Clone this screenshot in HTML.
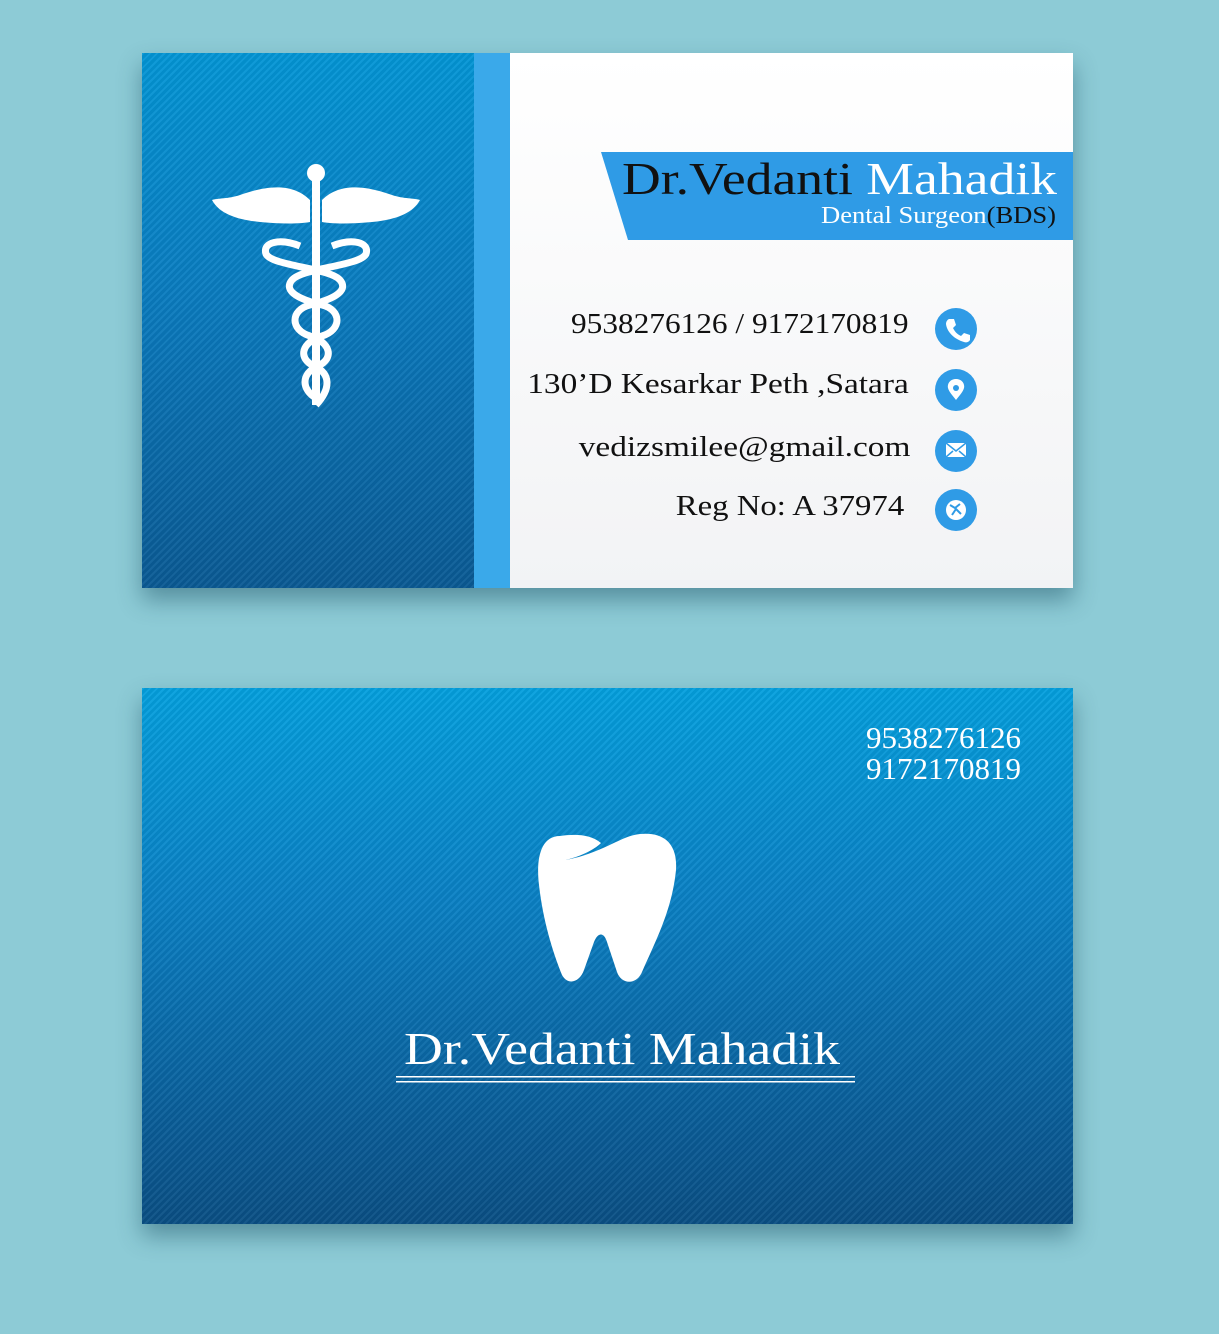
<!DOCTYPE html>
<html><head><meta charset="utf-8"><style>
body{margin:0;width:1219px;height:1334px;background:#8dcbd6;position:relative;overflow:hidden;font-family:"Liberation Serif",serif}
.abs{position:absolute}
.txt{position:absolute;color:#111;font-size:29px;white-space:nowrap;transform-origin:right center}
.ic{position:absolute;left:935px;width:42px;height:42px;border-radius:50%;background:#2f9be6}
</style></head><body>
<div class="abs" style="left:142px;top:53px;width:931px;height:535px;box-shadow:0 12px 22px rgba(20,70,90,0.45);background:#fff"></div>
<div class="abs" style="left:142px;top:53px;width:332px;height:535px;background-color:#0d79bb;background-image:repeating-linear-gradient(135deg,rgba(255,255,255,0.05) 0 2px,rgba(0,0,0,0.05) 2px 5px),linear-gradient(180deg,#0396d6 0%,#0a7cc0 45%,#0a5a94 100%)"></div>
<div class="abs" style="left:474px;top:53px;width:36px;height:535px;background:#3aa9ea"></div>
<div class="abs" style="left:510px;top:53px;width:563px;height:535px;background:linear-gradient(180deg,#fff,#f2f3f5)"></div>
<svg class="abs" style="left:0;top:0" width="1219" height="600">
<g fill="#fff">
<circle cx="316" cy="173" r="9"/>
<rect x="312" y="175" width="8" height="230"/>
<path d="M310,200 C290,180 260,188 240,195 C228,199 218,198 212,200 C220,215 240,220 260,222 C280,224 300,224 310,222Z"/>
<path d="M322,200 C342,180 372,188 392,195 C404,199 414,198 420,200 C412,215 392,220 372,222 C352,224 332,224 322,222Z"/>
</g>
<g fill="none" stroke="#fff" stroke-width="7">
<path d="M300,246 C280,238 262,242 266,254 C272,266 330,268 340,280 C350,292 330,300 310,305 C290,310 290,330 310,336 C330,342 335,358 318,366 C300,374 302,390 316,398"/>
<path d="M332,246 C352,238 370,242 366,254 C360,266 302,268 292,280 C282,292 302,300 322,305 C342,310 342,330 322,336 C302,342 297,358 314,366 C332,374 330,390 316,405"/>
</g>
<path d="M601,152 L1073,152 L1073,240 L628,240 Z" fill="#2f9be6"/>
<text x="622" y="194" font-family="Liberation Serif" font-size="46" fill="#111" textLength="435" lengthAdjust="spacingAndGlyphs">Dr.Vedanti <tspan fill="#fff">Mahadik</tspan></text>
<text x="821" y="223" font-family="Liberation Serif" font-size="24" fill="#fff" textLength="235" lengthAdjust="spacingAndGlyphs">Dental Surgeon<tspan fill="#111">(BDS)</tspan></text>
</svg>
<div class="txt" style="right:310px;top:308px;transform:scaleX(1.08)">9538276126 / 9172170819</div>
<div class="txt" style="right:310px;top:368px;transform:scaleX(1.15)">130’D Kesarkar Peth ,Satara</div>
<div class="txt" style="right:309px;top:431px;transform:scaleX(1.15)">vedizsmilee@gmail.com</div>
<div class="txt" style="right:315px;top:490px;transform:scaleX(1.13)">Reg No: A 37974</div>
<div class="ic" style="top:308px"></div><div class="ic" style="top:369px"></div><div class="ic" style="top:430px"></div><div class="ic" style="top:489px"></div>
<svg class="abs" style="left:935px;top:308px" width="42" height="230">
<path d="M14,11 l5,0 2,6 -3,3 c2,4 4,6 8,8 l3,-3 6,2 0,5 c-1,2 -4,3 -6,2 C19,31 12,24 11,16 c0,-2 1,-4 3,-5z" fill="#fff"/>
<path d="M21,71 c-6,0 -9,5 -8,9 c1,4 5,8 8,12 c3,-4 7,-8 8,-12 c1,-4 -2,-9 -8,-9z" fill="#fff"/><circle cx="21" cy="80" r="3" fill="#2f9be6"/>
<rect x="11" y="135" width="20" height="14" fill="#fff"/><path d="M11,135 l10,8 10,-8 M11,149 l7,-6 M31,149 l-7,-6" stroke="#2f9be6" stroke-width="1.5" fill="none"/>
<circle cx="21" cy="202" r="10" fill="#fff"/><path d="M15,197 l5,3 5,-4 M17,207 l4,-6 5,5" stroke="#2f9be6" stroke-width="2" fill="none"/>
</svg>
<div class="abs" style="left:142px;top:688px;width:931px;height:536px;box-shadow:0 12px 22px rgba(20,70,90,0.45);background-color:#0a7cc0;background-image:repeating-linear-gradient(135deg,rgba(255,255,255,0.05) 0 2px,rgba(0,0,0,0.05) 2px 5px),linear-gradient(180deg,#04a0de 0%,#0a80c4 40%,#0a5a94 85%,#0a4f84 100%)"></div>
<div class="abs" style="left:866px;top:722px;color:#fff;font-size:31px;line-height:31px">9538276126<br>9172170819</div>
<svg class="abs" style="left:0;top:0" width="1219" height="1334">
<path fill="#fff" d="M560,836 C540,836 536,860 539,885 C543,920 552,950 562,975 C568,986 580,982 584,970 L594,942 C598,932 604,932 607,942 L617,972 C621,984 636,986 642,972 C656,940 672,910 676,870 C678,840 660,832 640,834 C620,836 605,852 566,860 C585,855 596,848 601,843 C590,834 575,834 560,836Z"/>
<text x="404" y="1064" font-family="Liberation Serif" font-size="46" fill="#fff" textLength="436" lengthAdjust="spacingAndGlyphs">Dr.Vedanti Mahadik</text>
<rect x="396" y="1076" width="459" height="1.5" fill="#fff"/>
<rect x="396" y="1081" width="459" height="1.5" fill="#fff"/>
</svg>
</body></html>
